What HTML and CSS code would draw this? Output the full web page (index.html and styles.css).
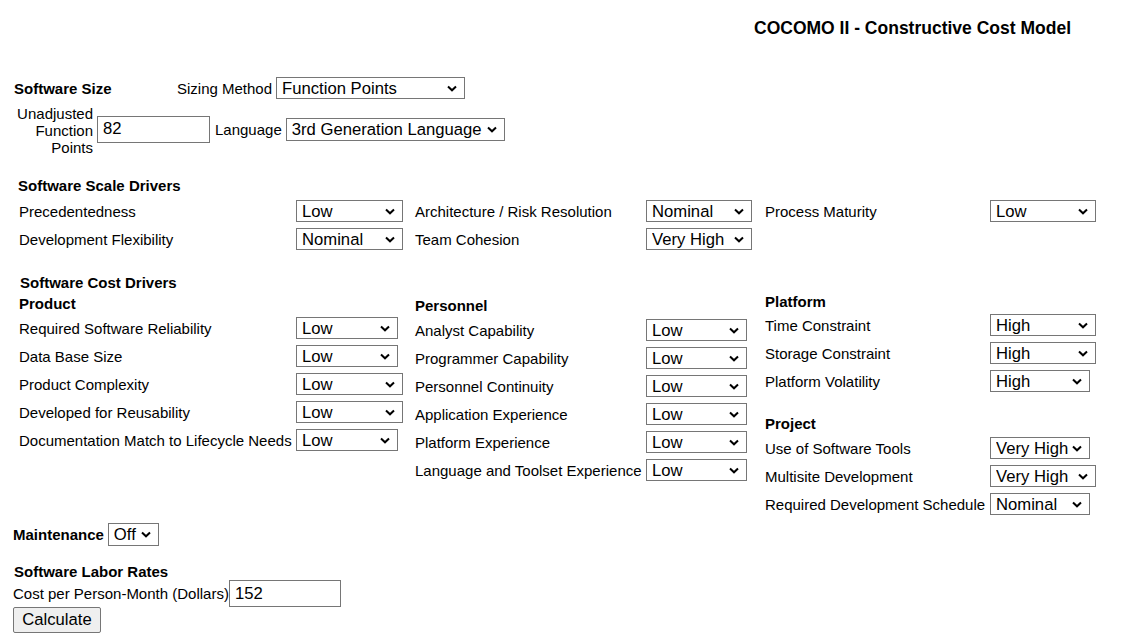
FILE: index.html
```html
<!DOCTYPE html>
<html>
<head>
<meta charset="utf-8">
<title>COCOMO II - Constructive Cost Model</title>
<link rel="stylesheet" href="styles.css">
</head>
<body>
<form class="page">
  <h1 class="title">COCOMO II - Constructive Cost Model</h1>

  <div class="size-row1">
    <span class="h size-h">Software Size</span>
    <label class="lbl gap-r">Sizing Method</label>
    <select class="sel w-method">
      <option>Source Lines of Code</option>
      <option selected>Function Points</option>
    </select>
  </div>
  <div class="size-row2">
    <label class="ufp">Unadjusted<br>Function<br>Points</label>
    <input class="txt w-ufp" type="text" value="82">
    <label class="lbl lang-l">Language</label>
    <select class="sel w-lang">
      <option>Ada 95</option>
      <option selected>3rd Generation Language</option>
      <option>4th Generation Language</option>
    </select>
  </div>

  <div class="h sec-h scale-h">Software Scale Drivers</div>
  <div class="scale-grid">
    <span>Precedentedness</span>
    <select class="sel w-eh"><option>Very Low</option><option selected>Low</option><option>Nominal</option><option>High</option><option>Very High</option><option>Extra High</option></select>
    <span>Architecture / Risk Resolution</span>
    <select class="sel w-eh2"><option>Very Low</option><option>Low</option><option selected>Nominal</option><option>High</option><option>Very High</option><option>Extra High</option></select>
    <span>Process Maturity</span>
    <select class="sel w-eh2"><option>Very Low</option><option selected>Low</option><option>Nominal</option><option>High</option><option>Very High</option><option>Extra High</option></select>

    <span>Development Flexibility</span>
    <select class="sel w-eh"><option>Very Low</option><option>Low</option><option selected>Nominal</option><option>High</option><option>Very High</option><option>Extra High</option></select>
    <span>Team Cohesion</span>
    <select class="sel w-eh2"><option>Very Low</option><option>Low</option><option>Nominal</option><option>High</option><option selected>Very High</option><option>Extra High</option></select>
  </div>

  <div class="h cost-h">Software Cost Drivers</div>
  <div class="cost-cols">
    <div class="col col-product">
      <div class="h sub-h">Product</div>
      <div class="drv-grid g1">
        <span>Required Software Reliability</span>
        <select class="sel w-vh"><option>Very Low</option><option selected>Low</option><option>Nominal</option><option>High</option><option>Very High</option></select>
        <span>Data Base Size</span>
        <select class="sel w-vh"><option selected>Low</option><option>Nominal</option><option>High</option><option>Very High</option></select>
        <span>Product Complexity</span>
        <select class="sel w-eh"><option>Very Low</option><option selected>Low</option><option>Nominal</option><option>High</option><option>Very High</option><option>Extra High</option></select>
        <span>Developed for Reusability</span>
        <select class="sel w-eh"><option selected>Low</option><option>Nominal</option><option>High</option><option>Very High</option><option>Extra High</option></select>
        <span>Documentation Match to Lifecycle Needs</span>
        <select class="sel w-vh"><option>Very Low</option><option selected>Low</option><option>Nominal</option><option>High</option><option>Very High</option></select>
      </div>
    </div>

    <div class="col col-personnel">
      <div class="h sub-h">Personnel</div>
      <div class="drv-grid g2">
        <span>Analyst Capability</span>
        <select class="sel w-vh2"><option>Very Low</option><option selected>Low</option><option>Nominal</option><option>High</option><option>Very High</option></select>
        <span>Programmer Capability</span>
        <select class="sel w-vh2"><option>Very Low</option><option selected>Low</option><option>Nominal</option><option>High</option><option>Very High</option></select>
        <span>Personnel Continuity</span>
        <select class="sel w-vh2"><option>Very Low</option><option selected>Low</option><option>Nominal</option><option>High</option><option>Very High</option></select>
        <span>Application Experience</span>
        <select class="sel w-vh2"><option>Very Low</option><option selected>Low</option><option>Nominal</option><option>High</option><option>Very High</option></select>
        <span>Platform Experience</span>
        <select class="sel w-vh2"><option>Very Low</option><option selected>Low</option><option>Nominal</option><option>High</option><option>Very High</option></select>
        <span>Language and Toolset Experience</span>
        <select class="sel w-vh2"><option>Very Low</option><option selected>Low</option><option>Nominal</option><option>High</option><option>Very High</option></select>
      </div>
    </div>

    <div class="col col-platform">
      <div class="h sub-h">Platform</div>
      <div class="drv-grid g3 plat-grid">
        <span>Time Constraint</span>
        <select class="sel w-eh2"><option>Nominal</option><option selected>High</option><option>Very High</option><option>Extra High</option></select>
        <span>Storage Constraint</span>
        <select class="sel w-eh2"><option>Nominal</option><option selected>High</option><option>Very High</option><option>Extra High</option></select>
        <span>Platform Volatility</span>
        <select class="sel w-vh3"><option>Low</option><option>Nominal</option><option selected>High</option><option>Very High</option></select>
      </div>
      <div class="h sub-h proj-h">Project</div>
      <div class="drv-grid g3">
        <span>Use of Software Tools</span>
        <select class="sel w-vh3"><option>Very Low</option><option>Low</option><option>Nominal</option><option>High</option><option selected>Very High</option></select>
        <span>Multisite Development</span>
        <select class="sel w-eh2"><option>Very Low</option><option>Low</option><option>Nominal</option><option>High</option><option selected>Very High</option><option>Extra High</option></select>
        <span>Required Development Schedule</span>
        <select class="sel w-vh3"><option>Very Low</option><option>Low</option><option selected>Nominal</option><option>High</option><option>Very High</option></select>
      </div>
    </div>
  </div>

  <div class="maint-row">
    <span class="h">Maintenance</span>
    <select class="sel w-off"><option selected>Off</option><option>On</option></select>
  </div>

  <div class="h labor-h">Software Labor Rates</div>
  <div class="labor-row">
    <label>Cost per Person-Month (Dollars)</label>
    <input class="txt w-cost" type="text" value="152">
  </div>
  <button class="btn" type="button">Calculate</button>
</form>
</body>
</html>
```

FILE: styles.css
```css
html, body {
  margin: 0;
  background: #fff;
}
body {
  font-family: "Liberation Sans", Arial, sans-serif;
  font-size: 15px;
  color: #000;
}
.page {
  display: block;
  padding-top: 18px;
}
.h {
  font-weight: bold;
  line-height: 17px;
}
.title {
  margin: 0;
  padding-right: 62px;
  text-align: right;
  font-size: 17.5px;
  font-weight: bold;
  line-height: 20px;
}

/* form controls */
.sel {
  -webkit-appearance: none;
  appearance: none;
  box-sizing: border-box;
  height: 22px;
  font-family: "Liberation Sans", Arial, sans-serif;
  font-size: 16.67px;
  line-height: 20px;
  color: #000;
  background-color: #fff;
  background-image: url("data:image/svg+xml;utf8,<svg xmlns='http://www.w3.org/2000/svg' width='10' height='7' viewBox='0 0 10 7'><polyline points='1,1.5 5,5.3 9,1.5' fill='none' stroke='%23000' stroke-width='2'/></svg>");
  background-repeat: no-repeat;
  background-position: right 7px center;
  background-size: 10px 7px;
  border: 1px solid #767676;
  border-radius: 0;
  padding: 1px 0 0 5px;
  margin: 0;
}
.txt {
  box-sizing: border-box;
  height: 27px;
  font-family: "Liberation Sans", Arial, sans-serif;
  font-size: 16.67px;
  color: #000;
  background: #fff;
  border: 1px solid #767676;
  border-radius: 0;
  padding: 0 5px;
  margin: 0;
}
.btn {
  display: block;
  box-sizing: border-box;
  width: 88px;
  height: 26px;
  margin: 0 0 0 13px;
  padding: 0;
  font-family: "Liberation Sans", Arial, sans-serif;
  font-size: 16.67px;
  color: #000;
  background: #efefef;
  border: 1px solid #767676;
  border-radius: 2px;
}
.w-method { width: 189px; }
.w-lang { width: 219px; height: 23px; }
.w-ufp { width: 113px; }
.w-cost { width: 112px; }
.w-eh { width: 107px; }
.w-eh2 { width: 106px; }
.w-vh { width: 102px; }
.w-vh2 { width: 101px; }
.w-vh3 { width: 100px; }
.w-off { width: 51px; height: 23px; }

/* software size */
.size-row1 {
  display: flex;
  align-items: center;
  height: 22px;
  margin-top: 39px;
  padding-left: 14px;
}
.size-h { width: 163px; }
.gap-r { margin-right: 4px; }
.size-row2 {
  display: flex;
  align-items: center;
  margin-top: 6px;
}
.ufp {
  width: 93px;
  text-align: right;
  line-height: 17px;
  margin-right: 4px;
}
.size-row2 .txt { margin-bottom: 3px; }
.size-row2 .sel { margin-bottom: 3px; }
.lang-l { margin: 0 4px 3px 5px; }

/* scale drivers */
.scale-h {
  margin-top: 21px;
  padding-left: 18px;
}
.scale-grid {
  display: grid;
  grid-template-columns: 277px 119px 231px 119px 225px auto;
  grid-auto-rows: 22px;
  row-gap: 6px;
  align-items: center;
  margin: 6px 0 0 19px;
}

/* cost drivers */
.cost-h {
  margin-top: 24px;
  padding-left: 20px;
}
.cost-cols {
  display: flex;
  align-items: flex-start;
  margin-left: 19px;
}
.col-product { width: 396px; margin-top: 4px; }
.col-personnel { width: 350px; margin-top: 6px; }
.col-platform { margin-top: 2px; }
.sub-h { height: 17px; }
.proj-h { margin-top: 23px; }
.drv-grid {
  display: grid;
  grid-auto-rows: 22px;
  row-gap: 6px;
  align-items: center;
  margin-top: 5px;
}
.plat-grid { margin-top: 4px; }
.g1 { grid-template-columns: 277px auto; }
.g2 { grid-template-columns: 231px auto; }
.g3 { grid-template-columns: 225px auto; }

/* maintenance & labor */
.maint-row {
  display: flex;
  align-items: center;
  height: 23px;
  margin-top: 8px;
  padding-left: 13px;
}
.maint-row .sel { margin-left: 4px; }
.labor-h {
  margin-top: 17px;
  padding-left: 14px;
}
.labor-row {
  display: flex;
  align-items: center;
  padding-left: 13px;
}
```
